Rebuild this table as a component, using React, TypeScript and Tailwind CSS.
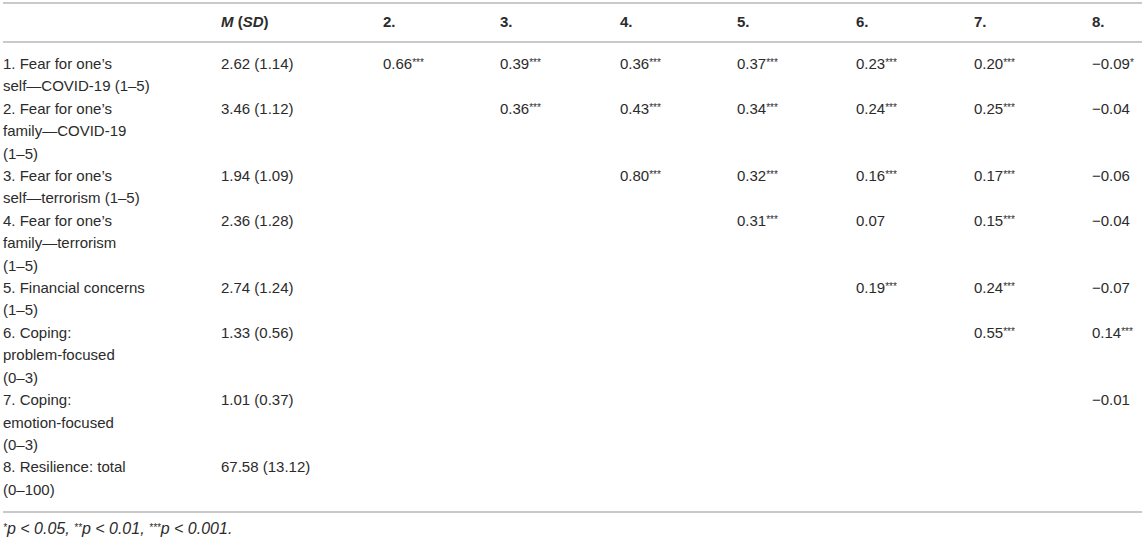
const rows: { label: string[]; m: string; r: (string | null)[] }[] = [
  { label: ['1. Fear for one’s', 'self—COVID-19 (1–5)'], m: '2.62 (1.14)', r: ['0.66***', '0.39***', '0.36***', '0.37***', '0.23***', '0.20***', '−0.09*'] },
  { label: ['2. Fear for one’s', 'family—COVID-19', '(1–5)'], m: '3.46 (1.12)', r: [null, '0.36***', '0.43***', '0.34***', '0.24***', '0.25***', '−0.04'] },
  { label: ['3. Fear for one’s', 'self—terrorism (1–5)'], m: '1.94 (1.09)', r: [null, null, '0.80***', '0.32***', '0.16***', '0.17***', '−0.06'] },
  { label: ['4. Fear for one’s', 'family—terrorism', '(1–5)'], m: '2.36 (1.28)', r: [null, null, null, '0.31***', '0.07', '0.15***', '−0.04'] },
  { label: ['5. Financial concerns', '(1–5)'], m: '2.74 (1.24)', r: [null, null, null, null, '0.19***', '0.24***', '−0.07'] },
  { label: ['6. Coping:', 'problem-focused', '(0–3)'], m: '1.33 (0.56)', r: [null, null, null, null, null, '0.55***', '0.14***'] },
  { label: ['7. Coping:', 'emotion-focused', '(0–3)'], m: '1.01 (0.37)', r: [null, null, null, null, null, null, '−0.01'] },
  { label: ['8. Resilience: total', '(0–100)'], m: '67.58 (13.12)', r: [null, null, null, null, null, null, null] },
]

function Stars({ s }: { s: string }) {
  return <span className="text-[10px] leading-none align-[3px]">{s}</span>
}

function Value({ v }: { v: string }) {
  const stars = v.match(/\*+$/)?.[0] ?? ''
  const num = stars ? v.slice(0, -stars.length) : v
  return (
    <span>
      {num}
      {stars && <Stars s={stars} />}
    </span>
  )
}

export default function App() {
  return (
    <div
      className="w-[1145px] h-[540px] bg-white px-[3px] pt-[2px] text-[#2b2b2b]"
      style={{ fontFamily: '"Liberation Sans", Arial, sans-serif' }}
    >
      <table className="w-[1139px] table-fixed border-collapse text-[15px] leading-[22.4px]">
        <colgroup>
          <col className="w-[218px]" />
          <col className="w-[162px]" />
          <col className="w-[117px]" />
          <col className="w-[120px]" />
          <col className="w-[117px]" />
          <col className="w-[119px]" />
          <col className="w-[118px]" />
          <col className="w-[118px]" />
          <col className="w-[50px]" />
        </colgroup>
        <thead>
          <tr className="h-[39px] border-t-2 border-b-2 border-[#c9c9c9]">
            <th className="p-0 text-left font-normal" />
            <th className="p-0 text-left font-bold">
              <i>M</i> (<i>SD</i>)
            </th>
            {['2.', '3.', '4.', '5.', '6.', '7.', '8.'].map((h) => (
              <th key={h} className="p-0 text-left font-bold">
                {h}
              </th>
            ))}
          </tr>
        </thead>
        <tbody>
          {rows.map((row, i) => (
            <tr key={i} className="align-top">
              <td className={`p-0 ${i === 0 ? 'pt-[10px]' : ''} ${i === rows.length - 1 ? 'pb-[10px]' : ''}`}>
                {row.label.map((l) => (
                  <div key={l} className="whitespace-nowrap">
                    {l}
                  </div>
                ))}
              </td>
              <td className={`p-0 ${i === 0 ? 'pt-[10px]' : ''}`}>{row.m}</td>
              {row.r.map((v, j) => (
                <td key={j} className={`p-0 whitespace-nowrap ${i === 0 ? 'pt-[10px]' : ''}`}>
                  {v && <Value v={v} />}
                </td>
              ))}
            </tr>
          ))}
        </tbody>
        <tfoot>
          <tr className="border-t-2 border-[#c9c9c9]">
            <td colSpan={9} className="p-0 pt-[6px] text-[16px] leading-[20px] italic">
              <Stars s="*" />p &lt; 0.05, <Stars s="**" />p &lt; 0.01, <Stars s="***" />p &lt; 0.001.
            </td>
          </tr>
        </tfoot>
      </table>
    </div>
  )
}
